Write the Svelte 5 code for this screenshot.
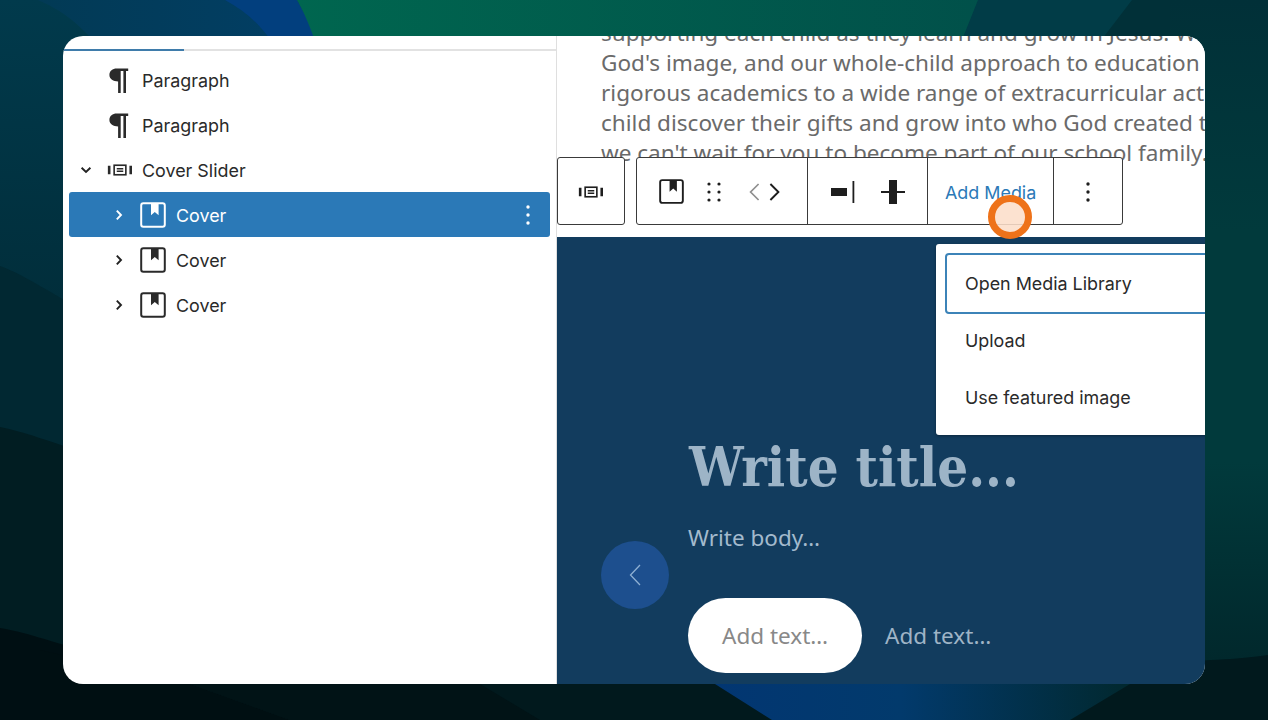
<script>
  const rows = [
    { label: 'Paragraph', icon: 'para', depth: 0 },
    { label: 'Paragraph', icon: 'para', depth: 0 },
    { label: 'Cover Slider', icon: 'slider', depth: 0, chevron: 'down' },
    { label: 'Cover', icon: 'cover', depth: 1, chevron: 'right', selected: true },
    { label: 'Cover', icon: 'cover', depth: 1, chevron: 'right' },
    { label: 'Cover', icon: 'cover', depth: 1, chevron: 'right' }
  ];
  const lines = [
    'supporting each child as they learn and grow in Jesus. We',
    "God's image, and our whole-child approach to education",
    'rigorous academics to a wide range of extracurricular act',
    'child discover their gifts and grow into who God created t',
    "we can't wait for you to become part of our school family."
  ];
</script>

{#snippet slider(size)}
  <svg class="ico" width={size} height={size} viewBox="0 0 24 24" fill="none" stroke="currentColor">
    <rect x="6.6" y="7.6" width="10.8" height="8.8" stroke-width="1.5" />
    <path d="M9 10.8h6M9 13.2h6" stroke-width="1.4" />
    <path d="M2 8v8M21.9 8v8" stroke-width="2.4" />
  </svg>
{/snippet}

{#snippet cover(size)}
  <svg class="ico" width={size} height={size} viewBox="0 0 26 26" fill="none">
    <rect x="1.2" y="1.2" width="23.6" height="23.6" rx="2.2" stroke="currentColor" stroke-width="2" />
    <path d="M11 1.5h7.6v11.7l-3.8-3.2-3.8 3.2z" fill="currentColor" />
  </svg>
{/snippet}

{#snippet para()}
  <svg class="ico" width="24" height="28" viewBox="1 0 24 28" fill="currentColor">
    <path d="M9.6 2.6h11.6v2.5h-2.2v22h-2.6v-22h-2.7v22h-2.6V15.4C6.4 15.4 2.4 13.2 2.4 9S5.7 2.6 9.6 2.6z" />
  </svg>
{/snippet}

<div class="stage">
  <svg class="wall" width="1268" height="720" viewBox="0 0 1268 720" aria-hidden="true">
    <defs>
      <linearGradient id="base" gradientUnits="userSpaceOnUse" x1="0" y1="0" x2="0" y2="300">
        <stop offset="0" stop-color="#013a4c" />
        <stop offset="1" stop-color="#012e3b" />
      </linearGradient>
      <linearGradient id="blue" x1="0" y1="0" x2="1" y2="0">
        <stop offset="0" stop-color="#023a55" />
        <stop offset="1" stop-color="#023f66" />
      </linearGradient>
      <linearGradient id="green" x1="0" y1="0" x2="1" y2="0">
        <stop offset="0" stop-color="#00664f" />
        <stop offset="1" stop-color="#01504a" />
      </linearGradient>
      <linearGradient id="right" gradientUnits="userSpaceOnUse" x1="0" y1="0" x2="0" y2="660">
        <stop offset="0" stop-color="#013038" />
        <stop offset="0.35" stop-color="#013a3c" />
        <stop offset="0.7" stop-color="#013a3c" />
        <stop offset="1" stop-color="#01282c" />
      </linearGradient>
      <linearGradient id="glow" x1="0" y1="0" x2="1" y2="0">
        <stop offset="0" stop-color="#023672" />
        <stop offset="0.45" stop-color="#023a6c" />
        <stop offset="1" stop-color="#01282e" />
      </linearGradient>
    </defs>
    <rect width="1268" height="720" fill="url(#base)" />
    <path d="M38 0 C70 14 85 30 110 60 L330 60 L300 0 Z" fill="url(#blue)" />
    <path d="M225 0 C250 14 262 26 285 60 L330 60 L297 0 Z" fill="#023f7e" />
    <path d="M297 0 C305 14 310 26 322 60 L1000 60 L1000 0 Z" fill="url(#green)" />
    <path d="M978 0 L954 60 L1100 60 L1132 0 Z" fill="#013c47" />
    <path d="M1132 0 L1086 60 L1268 60 L1268 0 Z" fill="#013038" />
    <rect x="1170" y="0" width="98" height="720" fill="url(#right)" />
    <path d="M1170 662 C1220 660 1250 658 1268 655 L1268 720 L1170 720 Z" fill="#01191d" />
    <path d="M0 266 C25 275 45 290 100 320 L100 720 L0 720 Z" fill="#012832" />
    <path d="M0 427 C25 432 45 440 100 458 L100 720 L0 720 Z" fill="#011d22" />
    <path d="M0 628 C25 632 45 640 100 655 L100 720 L0 720 Z" fill="#000f13" />
    <rect x="63" y="650" width="1142" height="70" fill="#01191d" />
    <path d="M40 650 L190 684 L290 720 L40 720 Z" fill="#000f12" />
    <path d="M190 684 L480 684 L540 720 L290 720 Z" fill="#011316" />
    <path d="M715 684 L1130 684 L1070 720 L772 720 Z" fill="url(#glow)" />
  </svg>

  <div class="card">
    <aside class="side">
      <div class="tabs"><span class="tab"></span></div>
      <ul class="tree">
        {#each rows as r}
          <li class="row" class:sel={r.selected} class:nested={r.depth}>
            <span class="chev">
              {#if r.chevron === 'down'}
                <svg width="12" height="12" viewBox="0 0 12 12" fill="none" stroke="currentColor" stroke-width="1.9"><path d="M1.6 3.8 6 8l4.4-4.2" /></svg>
              {:else if r.chevron === 'right'}
                <svg width="12" height="12" viewBox="0 0 12 12" fill="none" stroke="currentColor" stroke-width="1.9"><path d="M3.8 1.6 8 6l-4.2 4.4" /></svg>
              {/if}
            </span>
            <span class="rico">
              {#if r.icon === 'para'}{@render para()}
              {:else if r.icon === 'slider'}{@render slider(26)}
              {:else}{@render cover(26)}{/if}
            </span>
            <span class="lbl">{r.label}</span>
            {#if r.selected}
              <svg class="more" width="4" height="22" viewBox="0 0 4 22" fill="currentColor"><circle cx="2" cy="3" r="1.7" /><circle cx="2" cy="11" r="1.7" /><circle cx="2" cy="19" r="1.7" /></svg>
            {/if}
          </li>
        {/each}
      </ul>
    </aside>

    <main class="main">
      <section class="intro">
        {#each lines as l}<div class="line">{l}</div>{/each}
      </section>

      <section class="hero">
        <h1>Write title...</h1>
        <p class="body">Write body…</p>
        <div class="btns">
          <span class="fill">Add text…</span>
          <span class="ghost">Add text…</span>
        </div>
        <span class="prev">
          <svg width="14" height="24" viewBox="0 0 14 24" fill="none" stroke="currentColor" stroke-width="1.3"><path d="M12 2 2.5 12 12 22" /></svg>
        </span>
      </section>

      <div class="toolbar">
        <div class="group solo">{@render slider(26)}</div>
        <div class="group bar">
          <div class="seg first">
            {@render cover(25)}
            <svg class="drag" width="14" height="20" viewBox="0 0 14 20" fill="currentColor">
              <circle cx="2" cy="2" r="1.6" /><circle cx="12" cy="2" r="1.6" /><circle cx="2" cy="10" r="1.6" /><circle cx="12" cy="10" r="1.6" /><circle cx="2" cy="18" r="1.6" /><circle cx="12" cy="18" r="1.6" />
            </svg>
            <span class="movers">
              <svg width="11" height="18" viewBox="0 0 11 18" fill="none" stroke="#8f8f8f" stroke-width="1.7"><path d="M9.6 1 1.6 9l8 8" /></svg>
              <svg width="11" height="18" viewBox="0 0 11 18" fill="none" stroke="currentColor" stroke-width="1.9"><path d="M1.4 1l8 8-8 8" /></svg>
            </span>
          </div>
          <div class="seg align">
            <svg width="24" height="22" viewBox="0 0 24 22" fill="currentColor"><rect x="0" y="7" width="16" height="8" /><rect x="21.5" y="0" width="1.8" height="22" /></svg>
            <svg width="24" height="24" viewBox="0 0 24 24" fill="currentColor"><rect x="8" y="0" width="8" height="24" /><rect x="0" y="11" width="24" height="2" /></svg>
          </div>
          <div class="seg media">Add Media</div>
          <div class="seg dots">
            <svg width="4" height="22" viewBox="0 0 4 22" fill="currentColor"><circle cx="2" cy="3" r="1.7" /><circle cx="2" cy="11" r="1.7" /><circle cx="2" cy="19" r="1.7" /></svg>
          </div>
        </div>
      </div>

      <div class="menu">
        <div class="item focus">Open Media Library</div>
        <div class="item">Upload</div>
        <div class="item">Use featured image</div>
      </div>

      <span class="cursor"></span>
    </main>
  </div>
</div>

<style>
  :global(body) { margin: 0; background: #012a35; }
  .stage {
    position: relative;
    width: 1268px;
    height: 720px;
    overflow: hidden;
    padding: 36px 63px;
    box-sizing: border-box;
  }
  .wall { position: absolute; inset: 0; }
  .card {
    position: relative;
    display: flex;
    width: 1142px;
    height: 648px;
    border-radius: 20px;
    overflow: hidden;
    background: #fff;
  }
  .side {
    width: 494px;
    flex: none;
    box-sizing: border-box;
    border-right: 1px solid #dfdfdf;
    font-family: Inter, "Liberation Sans", sans-serif;
    color: #2a2a2a;
  }
  .tabs {
    height: 13px;
    border-bottom: 2px solid #e2e2e2;
    position: relative;
    margin-bottom: 6px;
  }
  .tab {
    position: absolute;
    left: 0;
    bottom: -2px;
    width: 121px;
    height: 2px;
    background: #3f7cab;
  }
  .tree { list-style: none; margin: 0; padding: 0 6px; }
  .row {
    display: flex;
    align-items: center;
    height: 45px;
    font-size: 17.9px;
    border-radius: 3px;
  }
  .chev { width: 12px; height: 12px; margin-left: 11px; display: flex; flex: none; color: #222; }
  .row.nested .chev { margin-left: 44px; }
  .rico { width: 26px; margin-left: 15px; margin-right: 9px; display: flex; justify-content: center; flex: none; }
  .row.nested .rico { margin-left: 15px; margin-right: 10px; }
  .lbl { flex: 1; padding-top: 2px; }
  .sel { background: #2b79b7; color: #fff; }
  .sel .chev { color: #fff; }
  .more { margin-right: 20px; }
  .ico { display: block; flex: none; }

  .main {
    position: relative;
    flex: 1;
    min-width: 0;
    display: flex;
    flex-direction: column;
  }
  .intro {
    height: 201px;
    flex: none;
    overflow: hidden;
    box-sizing: border-box;
    padding: 0 0 0 44px;
    font-family: "Noto Sans", sans-serif;
    font-size: 22.55px;
    line-height: 30px;
    color: #6a6a6a;
    white-space: nowrap;
    background: #fff;
  }
  .line { position: relative; top: -18.5px; }
  .hero {
    position: relative;
    flex: 1;
    background: #123c5e;
    padding: 195px 0 0 131px;
  }
  h1 {
    margin: 0 0 0 1px;
    font-family: "DejaVu Serif Condensed", "DejaVu Serif", serif;
    font-weight: 700;
    font-size: 54px;
    line-height: 70px;
    color: #9db4c7;
    white-space: nowrap;
  }
  .body {
    margin: 21px 0 0;
    font-family: "Noto Sans", sans-serif;
    font-size: 22.5px;
    line-height: 30px;
    color: #a3bacd;
  }
  .btns {
    display: flex;
    align-items: center;
    gap: 23px;
    margin-top: 45px;
    font-family: "Noto Sans", sans-serif;
    font-size: 22.5px;
  }
  .fill {
    background: #fff;
    color: #888;
    border-radius: 38px;
    height: 75px;
    padding: 0 34px;
    display: flex;
    align-items: center;
  }
  .ghost { color: #9fb4c6; }
  .prev {
    position: absolute;
    left: 44px;
    top: 304px;
    width: 68px;
    height: 68px;
    border-radius: 50%;
    background: #1d4f8e;
    display: flex;
    align-items: center;
    justify-content: center;
    color: #8fb0d3;
  }

  .toolbar {
    position: absolute;
    left: 0;
    top: 121px;
    display: flex;
    gap: 11px;
    font-family: Inter, "Liberation Sans", sans-serif;
    color: #1e1e1e;
  }
  .group {
    height: 68px;
    box-sizing: border-box;
    border: 1.5px solid #3a3a3a;
    border-radius: 3px;
    background: #fff;
    display: flex;
  }
  .solo { width: 68px; align-items: center; justify-content: center; padding-top: 1px; }
  .bar { align-items: stretch; }
  .seg { display: flex; align-items: center; box-sizing: border-box; border-left: 1.5px solid #3a3a3a; padding-top: 1px; }
  .seg.first { border-left: 0; width: 170px; padding-left: 22px; }
  .drag { margin-left: 23px; }
  .movers { display: flex; gap: 9px; margin-left: 28px; }
  .seg.align { width: 120px; padding-left: 23px; gap: 26px; }
  .seg.media { width: 126px; padding-left: 17px; font-size: 17.9px; color: #2b79b7; padding-top: 2px; }
  .seg.dots { width: 69px; justify-content: center; }

  .menu {
    position: absolute;
    left: 379px;
    top: 208px;
    width: 300px;
    height: 191px;
    box-sizing: border-box;
    padding: 9px 0 0 9px;
    background: #fff;
    border-radius: 3px;
    box-shadow: 0 1px 3px rgba(0, 0, 0, 0.35);
    font-family: Inter, "Liberation Sans", sans-serif;
    font-size: 17.9px;
    color: #2a2a2a;
    overflow: hidden;
  }
  .item { height: 57px; display: flex; align-items: center; padding: 2px 0 0 20px; box-sizing: border-box; }
  .focus { height: 61px; border: 2px solid #3c83b8; border-radius: 4px; padding: 0 0 0 18px; margin-right: -30px; margin-bottom: -3px; }

  .cursor {
    position: absolute;
    left: 431px;
    top: 159px;
    width: 44px;
    height: 44px;
    box-sizing: border-box;
    border: 7px solid #ee7219;
    border-radius: 50%;
    background: rgba(252, 222, 202, 0.88);
  }
</style>
